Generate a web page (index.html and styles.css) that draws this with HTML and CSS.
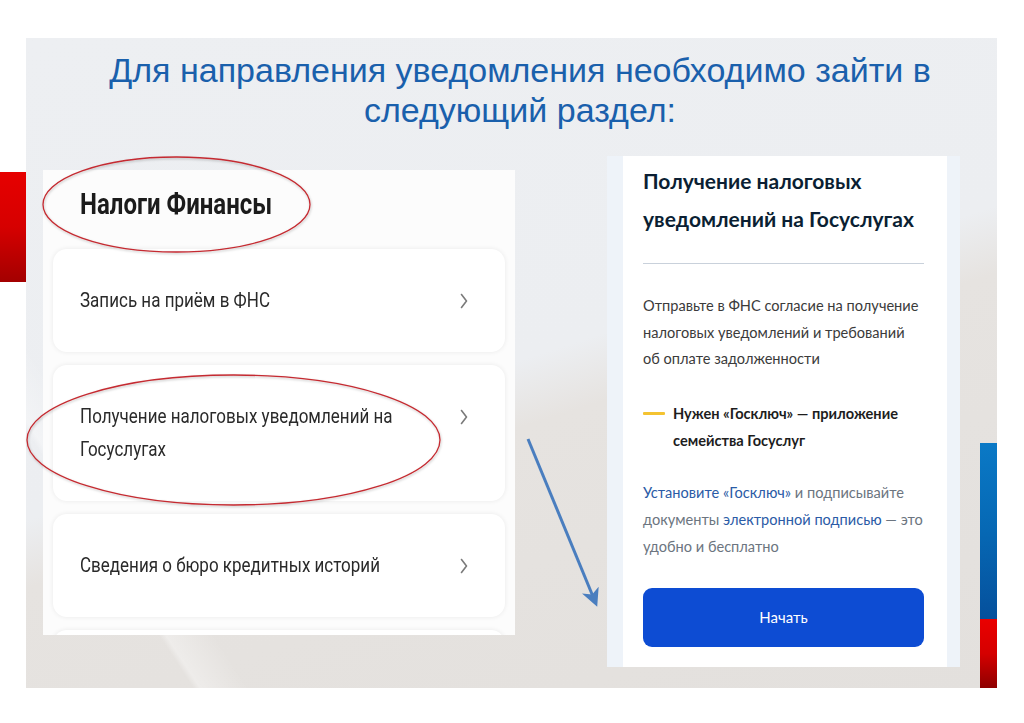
FILE: index.html
```html
<!DOCTYPE html>
<html lang="ru">
<head>
<meta charset="utf-8">
<title>Налоговые уведомления</title>
<link rel="stylesheet" href="styles.css">
</head>
<body>
<div class="page">
  <div class="flag-left"></div>
  <div class="slide">
    <h1 class="title">Для направления уведомления необходимо зайти в<br>следующий раздел:</h1>
    <div class="row">
      <div class="menu">
        <div class="menu-head"><span class="cn-head">Налоги Финансы</span></div>
        <div class="card">
          <div class="card-text"><span class="cn">Запись на приём в ФНС</span></div>
          <div class="chev"><svg width="8" height="16" viewBox="0 0 8 16"><path d="M1.5 1.5 L6.5 8 L1.5 14.5" fill="none" stroke="#7a7a7a" stroke-width="1.6" stroke-linecap="round" stroke-linejoin="round"/></svg></div>
        </div>
        <div class="card">
          <div class="card-text"><span class="cn">Получение налоговых уведомлений на</span><br><span class="cn">Госуслугах</span></div>
          <div class="chev"><svg width="8" height="16" viewBox="0 0 8 16"><path d="M1.5 1.5 L6.5 8 L1.5 14.5" fill="none" stroke="#7a7a7a" stroke-width="1.6" stroke-linecap="round" stroke-linejoin="round"/></svg></div>
        </div>
        <div class="card">
          <div class="card-text"><span class="cn">Сведения о бюро кредитных историй</span></div>
          <div class="chev"><svg width="8" height="16" viewBox="0 0 8 16"><path d="M1.5 1.5 L6.5 8 L1.5 14.5" fill="none" stroke="#7a7a7a" stroke-width="1.6" stroke-linecap="round" stroke-linejoin="round"/></svg></div>
        </div>
        <div class="card"></div>
      </div>
      <div class="gap-col"></div>
      <div class="service">
        <div class="service-inner">
          <h2 class="service-title">Получение налоговых<br>уведомлений на Госуслугах</h2>
          <hr class="divider">
          <p class="service-text">Отправьте в ФНС согласие на получение<br>налоговых уведомлений и требований<br>об оплате задолженности</p>
          <div class="note">
            <span class="dash"></span>
            <p class="note-text">Нужен «Госключ» — приложение<br>семейства Госуслуг</p>
          </div>
          <p class="service-hint"><span class="link">Установите «Госключ»</span> и подписывайте<br>документы <span class="link">электронной подписью</span> — это<br>удобно и бесплатно</p>
          <button class="start">Начать</button>
        </div>
      </div>
      <div class="flag-right">
        <div class="flag-blue"></div>
        <div class="flag-red"></div>
      </div>
    </div>
    <svg class="marks" width="971" height="650" viewBox="0 0 971 650">
      <defs>
        <marker id="ah" markerWidth="6" markerHeight="6" refX="3.2" refY="3" orient="auto" markerUnits="strokeWidth">
          <path d="M0 0 L6 3 L0 6 L1.6 3 Z" fill="#4a7ebf"/>
        </marker>
        <filter id="sh" x="-10%" y="-10%" width="120%" height="130%">
          <feDropShadow dx="0.6" dy="1.2" stdDeviation="0.8" flood-color="#000" flood-opacity="0.25"/>
        </filter>
      </defs>
      <ellipse cx="150.5" cy="166.5" rx="133.5" ry="47.5" fill="none" stroke="#c42a30" stroke-width="1.3" filter="url(#sh)"/>
      <ellipse cx="207.5" cy="402" rx="206.5" ry="65" fill="none" stroke="#c42a30" stroke-width="1.3" filter="url(#sh)"/>
      <line x1="502" y1="401" x2="568" y2="561" stroke="#4a7ebf" stroke-width="3" marker-end="url(#ah)"/>
    </svg>
  </div>
</div>
</body>
</html>
```
FILE: styles.css
```css
* { box-sizing: border-box; }
html, body { margin: 0; padding: 0; }
body {
  background: #ffffff;
  width: 1024px;
  height: 723px;
  overflow: hidden;
  font-family: "Liberation Sans", Arial, sans-serif;
}
.page {
  display: flex;
  align-items: flex-start;
}
.flag-left {
  width: 26px;
  height: 110px;
  margin-top: 172px;
  background: linear-gradient(180deg, #e60000 0%, #d60000 50%, #a30000 100%);
  flex: none;
}
.slide {
  position: relative;
  width: 971px;
  height: 650px;
  margin-top: 38px;
  background:
    linear-gradient(57deg, rgba(255,255,255,0) 0%, rgba(255,255,255,0) 12%, rgba(255,255,255,0.35) 12.5%, rgba(255,255,255,0) 16%),
    linear-gradient(162deg, #edeff2 0%, #eceef1 50%, #e6e3e0 57%, #e3e0dd 100%);
  flex: none;
}
.title {
  margin: 0;
  padding: 12px 0 0 17px;
  text-align: center;
  font-family: "Liberation Sans", Arial, sans-serif;
  font-weight: 400;
  font-size: 34px;
  line-height: 40px;
  color: #1a60ac;
}
.row {
  display: flex;
  align-items: flex-start;
  margin-top: 26px;
  padding-left: 17px;
  height: 532px;
}
.menu {
  width: 472px;
  height: 465px;
  margin-top: 14px;
  background: #fcfcfc;
  overflow: hidden;
  padding: 17px 10px 0 10px;
  font-family: Roboto, "Noto Sans", sans-serif;
  color: #222222;
  flex: none;
}
.cn, .cn-head {
  display: inline-block;
  transform: scaleX(0.81);
  transform-origin: 0 50%;
  white-space: nowrap;
}
.cn-head { transform: scaleX(0.8); }
.menu-head {
  padding-left: 27px;
  font-weight: 700;
  font-size: 30px;
  line-height: 34px;
  color: #1b1b1b;
  margin-bottom: 28px;
}
.card {
  display: flex;
  align-items: flex-start;
  background: #ffffff;
  border-radius: 14px;
  box-shadow: 0 0 5px rgba(0, 0, 0, 0.08);
  padding: 35px 37px 35px 27px;
  margin-bottom: 13px;
  font-size: 21px;
  line-height: 33px;
  color: #2a2a2a;
  min-height: 60px;
}
.card-text {
  flex: 1;
  min-width: 0;
}
.chev {
  height: 33px;
  display: flex;
  align-items: center;
  flex: none;
}
.chev svg { display: block; }
.gap-col {
  width: 92px;
  flex: none;
}
.service {
  width: 353px;
  height: 511px;
  background: #eef3f9;
  padding: 0 13px 0 16px;
  flex: none;
}
.service-inner {
  background: #ffffff;
  height: 100%;
  padding: 6px 23px 0 20px;
  font-family: Lato, "Noto Sans", sans-serif;
  white-space: nowrap;
}
.service-title {
  margin: 0;
  font-size: 21px;
  font-weight: 700;
  line-height: 38px;
  color: #0b1f33;
}
.divider {
  margin: 25px 0 0 0;
  border: 0;
  height: 1px;
  background: #c9d1db;
}
.service-text {
  margin: 29px 0 0 0;
  font-size: 14.6px;
  line-height: 26.5px;
  color: #3b3b3b;
}
.note {
  display: flex;
  align-items: flex-start;
  margin-top: 27px;
}
.dash {
  width: 22px;
  height: 3px;
  background: #f4c331;
  margin-top: 12px;
  margin-right: 8px;
  border-radius: 1px;
  flex: none;
}
.note-text {
  margin: 0;
  font-size: 14.6px;
  font-weight: 700;
  line-height: 27px;
  color: #1d1d1d;
}
.service-hint {
  margin: 25px 0 0 0;
  font-size: 14.6px;
  line-height: 27px;
  color: #6c7580;
}
.link { color: #2b5ba6; }
.start {
  display: block;
  width: 100%;
  height: 59px;
  margin-top: 28px;
  border: 0;
  border-radius: 9px;
  background: #0d4cd3;
  color: #ffffff;
  font-family: Lato, "Noto Sans", sans-serif;
  font-size: 15px;
}
.flag-right {
  width: 17px;
  margin-left: 20px;
  align-self: flex-end;
  display: flex;
  flex-direction: column;
  flex: none;
}
.flag-blue {
  height: 176px;
  background: linear-gradient(180deg, #0a79c6 0%, #0668b4 50%, #05509c 100%);
}
.flag-red {
  height: 69px;
  background: linear-gradient(180deg, #ea0000 0%, #d50000 50%, #8e0000 100%);
}
.marks {
  position: absolute;
  left: 0;
  top: 0;
  pointer-events: none;
  overflow: visible;
}
```
